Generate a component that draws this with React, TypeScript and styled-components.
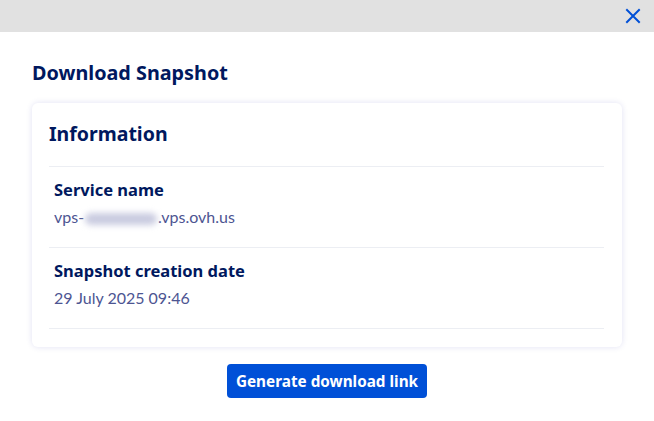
import React, { FC } from "react"
import styled, { createGlobalStyle } from "styled-components"

const GlobalStyle = createGlobalStyle`
  html, body {
    margin: 0;
    padding: 0;
    background: #ffffff;
    font-family: "Lato", "Noto Sans", sans-serif;
  }
`

const TopBar = styled.div`
  height: 32px;
  background: #e1e1e1;
  display: flex;
  justify-content: flex-end;
  align-items: center;
  padding-right: 12px;
`

const CloseButton = styled.button`
  border: none;
  background: transparent;
  padding: 0;
  width: 18px;
  height: 18px;
  display: flex;
  align-items: center;
  justify-content: center;
  cursor: pointer;
`

const Body = styled.div`
  padding: 28px 32px 0 32px;
  display: flex;
  flex-direction: column;
`

const Heading = styled.div`
  font-family: "Noto Sans", "Lato", sans-serif;
  font-weight: 700;
  color: #00185e;
`

const Title = styled(Heading)`
  margin: 0 0 17px 0;
  font-size: 19.8px;
  line-height: 26px;
`

const Card = styled.div`
  border-radius: 6px;
  box-shadow: 0 0 6px rgba(0, 14, 156, 0.12);
  padding: 16px 18px 18px 17px;
  display: flex;
  flex-direction: column;
`

const CardTitle = styled(Heading)`
  font-size: 19.5px;
  line-height: 30px;
  padding-bottom: 17px;
  border-bottom: 1px solid #eceef3;
`

const Row = styled.div`
  padding: 12px 0 0 5px;
  height: 81px;
  box-sizing: border-box;
  border-bottom: 1px solid #eceef3;
  display: flex;
  flex-direction: column;
  gap: 5px;
`

const Label = styled(Heading)`
  font-size: 16.5px;
  line-height: 22px;
`

const Value = styled.div`
  font-size: 16px;
  color: #4d5592;
  line-height: 22px;
`

const Blurred = styled.span`
  display: inline-block;
  width: 72px;
  height: 12px;
  margin: 0 1px;
  vertical-align: middle;
  background: #c9cbe0;
  border-radius: 6px;
  filter: blur(3px);
`

const Footer = styled.div`
  display: flex;
  justify-content: center;
  padding-top: 17px;
`

const PrimaryButton = styled.button`
  height: 34px;
  padding: 0 9px;
  border: none;
  border-radius: 4px;
  background: #0050d7;
  color: #ffffff;
  font-family: "Noto Sans", "Lato", sans-serif;
  font-size: 15.3px;
  font-weight: 700;
  cursor: pointer;
`

const App: FC = () => {
  return (
    <>
      <GlobalStyle />
      <TopBar>
        <CloseButton aria-label="Close">
          <svg width="16" height="16" viewBox="0 0 16 16">
            <path d="M2 2 L14 14 M14 2 L2 14" stroke="#0050d7" strokeWidth="2" strokeLinecap="square" />
          </svg>
        </CloseButton>
      </TopBar>
      <Body>
        <Title>Download Snapshot</Title>
        <Card>
          <CardTitle>Information</CardTitle>
          <Row>
            <Label>Service name</Label>
            <Value>vps-<Blurred />.vps.ovh.us</Value>
          </Row>
          <Row>
            <Label>Snapshot creation date</Label>
            <Value>29 July 2025 09:46</Value>
          </Row>
        </Card>
        <Footer>
          <PrimaryButton>Generate download link</PrimaryButton>
        </Footer>
      </Body>
    </>
  )
}

export default App
